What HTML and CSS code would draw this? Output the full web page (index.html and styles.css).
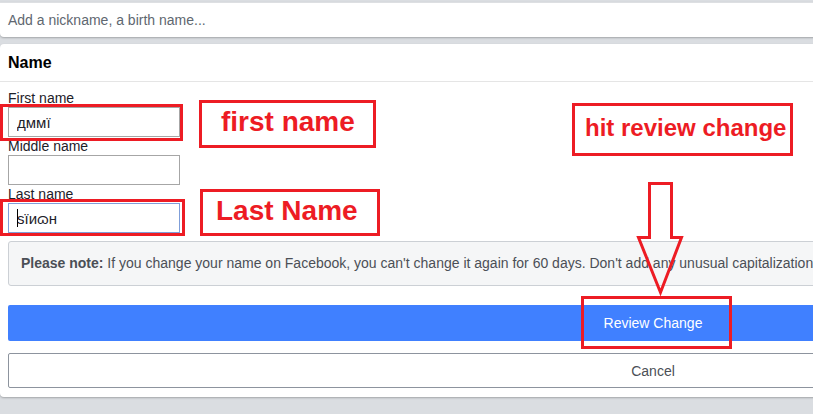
FILE: index.html
```html
<!DOCTYPE html>
<html lang="en">
<head>
  <meta charset="UTF-8">
  <meta name="viewport" content="width=device-width, initial-scale=1.0">
  <title>Name settings</title>
  <link rel="stylesheet" href="styles.css">
</head>
<body>

  <div class="card nick-card">
    <span class="nick-hint">Add a nickname, a birth name...</span>
  </div>

  <div class="card name-card">
    <div class="card-head">Name</div>

    <div class="card-body">
      <label class="field-label" for="first">First name</label>
      <input class="field" type="text" id="first" value="дммї">

      <label class="field-label" for="middle">Middle name</label>
      <input class="field" type="text" id="middle">

      <label class="field-label" for="last">Last name</label>
      <div class="field-wrap">
        <input class="field focused" type="text" id="last" value="sїиɷн">
        <span class="caret"></span>
      </div>

      <div class="note">
        <b>Please note:</b> If you change your name on Facebook, you can't change it again for 60 days. Don't add any unusual capitalization
      </div>

      <button class="btn btn-primary">Review Change</button>
      <button class="btn btn-cancel">Cancel</button>
    </div>
  </div>

  <!-- red markup drawn over the form -->
  <div class="mark mark-first-input"></div>
  <div class="mark mark-last-input"></div>
  <div class="mark mark-review"></div>
  <div class="mark tag tag-first">first name</div>
  <div class="mark tag tag-last">Last Name</div>
  <div class="mark tag tag-hit">hit review change</div>

  <svg class="arrow" width="60" height="120" viewBox="0 0 60 120">
    <polygon points="19.5,1.5 41.5,1.5 41.5,55.5 51.5,55.5 30.5,110.5 8.5,55.5 19.5,55.5"
             fill="none" stroke="#ed1c24" stroke-width="3" stroke-linejoin="miter"/>
  </svg>

</body>
</html>
```

FILE: styles.css
```css
body {
  margin: 0;
  background-color: #dadde1;
  font-family: "Liberation Sans", Arial, sans-serif;
  font-size: 14px;
  color: #1d2129;
  overflow: hidden;
  position: relative;
  height: 414px;
}

.card {
  width: 1306px;
  background-color: #fff;
  border-radius: 4px;
  box-shadow: 0 1px 2px rgba(0, 0, 0, 0.25);
}

.nick-card {
  margin-top: 2px;
  height: 35px;
  border-top: 1px solid #dddfe2;
  border-radius: 0 0 4px 4px;
  box-sizing: border-box;
  padding: 8px 8px 0;
  line-height: 18px;
}

.nick-hint {
  color: #606770;
}

.name-card {
  margin-top: 7px;
}

.card-head {
  height: 37px;
  line-height: 37px;
  padding-left: 8px;
  font-size: 16px;
  font-weight: bold;
  color: #000;
  border-bottom: 1px solid #e5e5e5;
}

.card-body {
  padding: 8px 8px 9px;
}

.field-label {
  display: block;
  line-height: 17px;
  color: #1d2129;
}

.field {
  display: block;
  width: 172px;
  height: 30px;
  margin: 0 0 1px;
  padding: 0 8px;
  box-sizing: border-box;
  border: 1px solid #a6a6a6;
  font-family: "Liberation Sans", "DejaVu Sans", sans-serif;
  font-size: 15px;
  color: #1d2129;
  outline: none;
}

.field.focused {
  border-color: #7f9ed9;
}

.field-wrap {
  position: relative;
  width: 172px;
}

.caret {
  position: absolute;
  left: 9px;
  top: 6px;
  width: 1px;
  height: 18px;
  background-color: #000;
}

.note {
  margin-top: 8px;
  height: 45px;
  box-sizing: border-box;
  padding: 0 12px;
  line-height: 43px;
  background-color: #f5f6f7;
  border: 1px solid #ccd0d5;
  border-radius: 3px;
  color: #4b4f56;
  white-space: nowrap;
  overflow: hidden;
}

.btn {
  display: block;
  width: 100%;
  font-family: "Liberation Sans", Arial, sans-serif;
  font-size: 14px;
  border-radius: 2px;
  cursor: pointer;
}

.btn-primary {
  margin-top: 19px;
  height: 36px;
  background-color: #4080ff;
  color: #fff;
  border: none;
}

.btn-cancel {
  margin-top: 12px;
  height: 35px;
  background-color: #fff;
  color: #4b4f56;
  border: 1px solid #8d949e;
}

/* annotations */
.mark {
  position: absolute;
  border: 3px solid #ed1c24;
  box-sizing: border-box;
}

.mark-first-input {
  left: 0;
  top: 104px;
  width: 183px;
  height: 37px;
}

.mark-last-input {
  left: 0;
  top: 199px;
  width: 185px;
  height: 37px;
}

.mark-review {
  left: 581px;
  top: 296px;
  width: 151px;
  height: 53px;
}

.tag {
  display: flex;
  align-items: center;
  background-color: #fff;
  color: #ed1c24;
  font-weight: bold;
  white-space: nowrap;
  padding-bottom: 4px;
}

.tag-first {
  left: 199px;
  top: 100px;
  width: 177px;
  height: 48px;
  padding-left: 19px;
  font-size: 28px;
}

.tag-last {
  left: 200px;
  top: 189px;
  width: 180px;
  height: 47px;
  padding-left: 13px;
  font-size: 28px;
}

.tag-hit {
  left: 572px;
  top: 103px;
  width: 221px;
  height: 53px;
  padding-left: 10px;
  font-size: 24px;
}

.arrow {
  position: absolute;
  left: 630px;
  top: 182px;
}
```
